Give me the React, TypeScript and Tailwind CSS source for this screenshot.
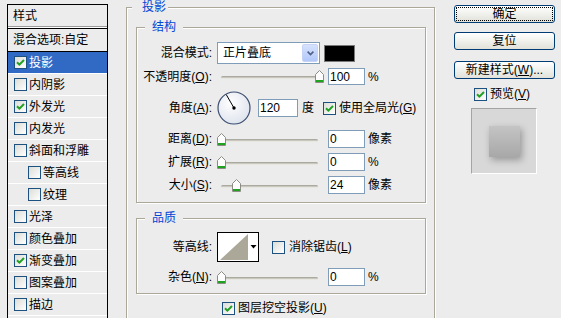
import React from 'react';

const STYLES: { name: string; on?: boolean; sub?: boolean; sel?: boolean }[] = [
  { name: '投影', on: true, sel: true },
  { name: '内阴影' },
  { name: '外发光', on: true },
  { name: '内发光' },
  { name: '斜面和浮雕' },
  { name: '等高线', sub: true },
  { name: '纹理', sub: true },
  { name: '光泽' },
  { name: '颜色叠加' },
  { name: '渐变叠加', on: true },
  { name: '图案叠加' },
  { name: '描边' },
];

function Check({ on }: { on?: boolean }) {
  return (
    <span className="w-[13px] h-[13px] shrink-0 border border-[#1c5180] bg-linear-to-br from-[#dcdcd7] to-white flex items-center justify-center">
      {on && (
        <svg width="9" height="9" viewBox="0 0 9 9">
          <path d="M1 4.2 L3.4 6.6 L8 2" fill="none" stroke="#21a121" strokeWidth="2" />
        </svg>
      )}
    </span>
  );
}

function Slider({ pos }: { pos: number }) {
  return (
    <div className="relative ml-[5px] w-[106px] h-[13px] shrink-0">
      <div className="mt-[6px] ml-[4px] w-[97px] h-[3px] rounded-full bg-linear-to-b from-[#9d9b90] to-[#f6f6f0]" />
      <svg className="absolute top-0" style={{ left: pos }} width="9" height="13" viewBox="0 0 9 13">
        <path d="M0.5 12.5V4.5L4.5 0.5L8.5 4.5V12.5Z" fill="#fdfdfd" stroke="#8c8c84" />
        <rect x="1" y="10" width="7" height="2" fill="#21a121" />
      </svg>
    </div>
  );
}

function Field({ value }: { value: string }) {
  return (
    <div className="ml-[5px] w-[37px] h-[18px] border border-[#7f9db9] bg-white pl-[1px] flex items-center shrink-0">
      {value}
    </div>
  );
}

function Label({ children }: { children: React.ReactNode }) {
  return <span className="w-[75px] text-right shrink-0">{children}</span>;
}

function SliderRow({ label, pos, value, unit, className }: { label: React.ReactNode; pos: number; value: string; unit: string; className: string }) {
  return (
    <div className={`flex items-center h-[18px] ${className}`}>
      <Label>{label}</Label>
      <Slider pos={pos} />
      <Field value={value} />
      <span className="ml-[3px]">{unit}</span>
    </div>
  );
}

function GroupTitle({ children }: { children: React.ReactNode }) {
  return <div className="-mt-[7px] ml-[8px] px-[7px] w-fit bg-[#ececec] text-[#0046d5] leading-[12px]">{children}</div>;
}

function Button({ children, focus }: { children: React.ReactNode; focus?: boolean }) {
  return (
    <div
      className={
        focus
          ? 'h-[18px] rounded-[3px] border border-[#003c74] bg-linear-to-b from-white to-[#e2e2da] flex items-center justify-center outline-1 outline-dotted outline-black outline-offset-[-3px]'
          : 'h-[18px] rounded-[3px] border border-[#003c74] bg-linear-to-b from-white to-[#e2e2da] flex items-center justify-center'
      }
    >
      {children}
    </div>
  );
}

export default function App() {
  return (
    <div className="w-[561px] h-[318px] overflow-hidden bg-[#ececec] flex items-start text-[12px] leading-[14px] text-black font-['Liberation_Sans','Noto_Sans_CJK_SC',sans-serif]">
      {/* style list */}
      <div className="ml-[7px] mt-[4px] w-[101px] h-[320px] shrink-0 border-x border-t border-black">
        <div className="h-[22px] pl-[5px] flex items-center border-b border-[#9a9a9a]">样式</div>
        <div className="h-px bg-white" />
        <div className="h-[24px] pl-[5px] flex items-center border-y border-black">混合选项:自定</div>
        {STYLES.map((s) => (
          <div
            key={s.name}
            className={`h-[22px] flex items-center gap-[2px] border-b border-white ${s.sub ? 'pl-[20px]' : 'pl-[6px]'} ${s.sel ? 'bg-[#316ac5] text-white' : ''}`}
          >
            <Check on={s.on} />
            <span>{s.name}</span>
          </div>
        ))}
      </div>

      {/* drop shadow settings */}
      <div className="ml-[18px] mt-[7px] w-[309px] h-[330px] shrink-0 border border-[#aca899] shadow-[inset_1px_1px_0_#fff,1px_1px_0_#fff]">
        <div className="-mt-[7px] ml-[5px] pl-[10px] pr-[2px] w-fit bg-[#ececec] text-[#0046d5] leading-[12px]">投影</div>

        <div className="ml-[9px] mt-[14px] w-[290px] h-[176px] border border-[#aca899] shadow-[inset_1px_1px_0_#fff,1px_1px_0_#fff]">
          <GroupTitle>结构</GroupTitle>
          <div className="flex items-center mt-[9px] h-[22px]">
            <Label>混合模式:</Label>
            <div className="ml-[5px] w-[103px] h-[22px] border border-[#7f9db9] bg-white flex items-center shrink-0">
              <span className="flex-1 pl-[5px]">正片叠底</span>
              <span className="w-[16px] h-[18px] mr-[1px] rounded-[2px] border border-[#c6d5f7] bg-linear-to-b from-[#d6e2fd] to-[#b2c8fa] flex items-center justify-center">
                <svg width="7" height="5" viewBox="0 0 7 5">
                  <path d="M0.6 0.6 L3.5 3.5 L6.4 0.6" fill="none" stroke="#4d6185" strokeWidth="1.6" />
                </svg>
              </span>
            </div>
            <div className="ml-[4px] w-[31px] h-[17px] bg-black border border-[#7a7a7a]" />
          </div>
          <div className="flex items-center mt-[4px] h-[17px]">
            <Label>
              不透明度(<u>O</u>):
            </Label>
            <Slider pos={98} />
            <div className="ml-[5px] w-[37px] h-[17px] border border-[#7f9db9] bg-white pl-[1px] flex items-center shrink-0">100</div>
            <span className="ml-[3px]">%</span>
          </div>
          <div className="flex items-center mt-[6px] h-[34px]">
            <Label>
              角度(<u>A</u>):
            </Label>
            <svg className="ml-[5px] shrink-0" width="34" height="34" viewBox="0 0 34 34">
              <defs>
                <radialGradient id="dial" cx="40%" cy="35%" r="70%">
                  <stop offset="0" stopColor="#ffffff" />
                  <stop offset="1" stopColor="#dde2ec" />
                </radialGradient>
              </defs>
              <circle cx="17" cy="17" r="16" fill="url(#dial)" stroke="#3b4e72" strokeWidth="1.2" />
              <line x1="17" y1="17" x2="9.2" y2="3.5" stroke="#000" strokeWidth="1" />
              <circle cx="17" cy="17" r="1.7" fill="#000" />
            </svg>
            <div className="ml-[7px] w-[40px] h-[18px] border border-[#7f9db9] bg-white pl-[1px] flex items-center shrink-0">120</div>
            <span className="ml-[4px]">度</span>
            <span className="ml-[9px]">
              <Check on />
            </span>
            <span className="ml-[3px]">
              使用全局光(<u>G</u>)
            </span>
          </div>
          <SliderRow className="mt-[5px]" label={<>距离(<u>D</u>):</>} pos={0} value="0" unit="像素" />
          <SliderRow className="mt-[5px]" label={<>扩展(<u>R</u>):</>} pos={0} value="0" unit="%" />
          <SliderRow className="mt-[5px]" label={<>大小(<u>S</u>):</>} pos={15} value="24" unit="像素" />
        </div>

        <div className="ml-[9px] mt-[15px] w-[290px] h-[76px] border border-[#aca899] shadow-[inset_1px_1px_0_#fff,1px_1px_0_#fff]">
          <GroupTitle>品质</GroupTitle>
          <div className="flex items-center mt-[8px] h-[30px]">
            <Label>等高线:</Label>
            <svg className="ml-[5px] shrink-0" width="42" height="30" viewBox="0 0 42 30">
              <rect x="0.5" y="0.5" width="41" height="29" fill="#fff" stroke="#000" />
              <polygon points="3,28 31,2 31,28" fill="#aca899" />
              <polygon points="33.5,13 39.5,13 36.5,16.5" fill="#000" />
            </svg>
            <span className="ml-[13px]">
              <Check />
            </span>
            <span className="ml-[4px]">
              消除锯齿(<u>L</u>)
            </span>
          </div>
          <SliderRow className="mt-[6px]" label={<>杂色(<u>N</u>):</>} pos={0} value="0" unit="%" />
        </div>

        <div className="mt-[7px] ml-[95px] flex items-center gap-[3px]">
          <Check on />
          <span>
            图层挖空投影(<u>U</u>)
          </span>
        </div>
      </div>

      {/* buttons + preview */}
      <div className="ml-[19px] w-[101px] shrink-0 flex flex-col">
        <div className="mt-[5px]">
          <Button focus>确定</Button>
        </div>
        <div className="mt-[9px]">
          <Button>复位</Button>
        </div>
        <div className="mt-[11px]">
          <Button>
            新建样式(<u>W</u>)...
          </Button>
        </div>
        <div className="mt-[8px] pl-[20px] flex items-center gap-[3px]">
          <Check on />
          <span>
            预览(<u>V</u>)
          </span>
        </div>
        <div className="mt-[7px] ml-[17px] w-[66px] h-[66px] bg-[#d8d8d8] border-t border-l border-[#a4a4a4] border-r-white border-b-white border-r border-b flex items-center justify-center">
          <div className="w-[31px] h-[31px] bg-linear-to-b from-[#c4c4c4] to-[#a8a8a8] shadow-[2px_3px_7px_rgba(0,0,0,0.3)]" />
        </div>
      </div>
    </div>
  );
}
